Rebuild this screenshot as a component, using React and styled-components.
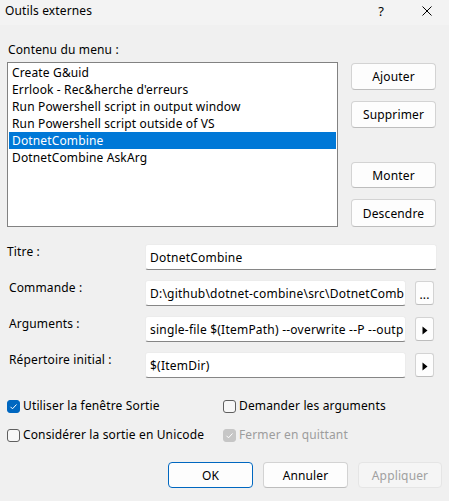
import React from "react";
import styled, { createGlobalStyle } from "styled-components";

const GlobalStyle = createGlobalStyle`
  html, body {
    margin: 0;
    padding: 0;
    background: #f0f0f0;
  }
  body {
    font-family: "Noto Sans", "Open Sans", sans-serif;
    font-size: 12px;
    letter-spacing: 0.14px;
    color: #000;
  }
  * { box-sizing: border-box; }
`;

const Dialog = styled.div`
  width: 449px;
  height: 501px;
  background: #f0f0f0;
  display: flex;
  flex-direction: column;
  overflow: hidden;
`;

const TitleBar = styled.div`
  height: 25px;
  flex: none;
  background: #f3f3f3;
  display: flex;
  align-items: center;
  padding-left: 5px;
`;

const Title = styled.div`
  flex: 1;
  line-height: 16px;
  margin-top: -3px;
`;

const HelpMark = styled.div`
  margin-top: -3px;
  margin-right: 38px;
  line-height: 16px;
  font-size: 13px;
`;

const CloseMark = styled.svg`
  margin-top: -3px;
  margin-right: 17px;
  width: 10px;
  height: 10px;
`;

const Content = styled.div`
  padding: 0 7px;
  display: flex;
  flex-direction: column;
`;

const SectionLabel = styled.div`
  margin-top: 17px;
  padding-left: 1px;
  line-height: 16px;
`;

const TopSection = styled.div`
  margin-top: 4px;
  display: flex;
  gap: 13px;
`;

const ListBox = styled.div`
  width: 331px;
  height: 165px;
  background: #fff;
  border: 1px solid #828282;
  padding: 1px 1px;
`;

const ListItem = styled.div`
  height: 17px;
  line-height: 17px;
  padding-left: 3px;
  white-space: nowrap;
  background: ${p => (p.$selected ? "#0078d7" : "transparent")};
  color: ${p => (p.$selected ? "#fff" : "#000")};
`;

const SideButtons = styled.div`
  width: 85px;
  padding-top: 1px;
  display: flex;
  flex-direction: column;
  gap: 11px;
`;

const Button = styled.div`
  width: ${p => p.$width || 85}px;
  height: ${p => p.$height || 27}px;
  margin-top: ${p => p.$offset || 0}px;
  display: flex;
  align-items: center;
  justify-content: center;
  background: ${p => (p.$disabled ? "#f5f5f5" : "#fdfdfd")};
  color: ${p => (p.$disabled ? "#a0a0a0" : "#000")};
  border: 1px solid ${p => (p.$primary ? "#0067c0" : p.$disabled ? "#e5e5e5" : "#d3d3d3")};
  border-bottom-color: ${p => (p.$primary ? "#0067c0" : p.$disabled ? "#e5e5e5" : "#bdbdbd")};
  border-radius: 4px;
  flex: none;
`;

const Form = styled.div`
  margin-top: 17px;
  display: flex;
  flex-direction: column;
  gap: 10px;
`;

const FormRow = styled.div`
  display: flex;
  align-items: flex-start;
`;

const FieldLabel = styled.div`
  width: 138px;
  flex: none;
  padding-left: ${p => p.$indent || 0}px;
  line-height: 16px;
`;

const Field = styled.input`
  width: ${p => p.$width}px;
  height: 26px;
  background: #fff;
  border: 1px solid #ececec;
  border-bottom: 1px solid #868686;
  border-radius: 3px;
  padding: 0 1px 0 4px;
  margin: 0;
  font: inherit;
  letter-spacing: 0.22px;
  color: #000;
  outline: none;
  flex: none;
`;

const SmallButton = styled(Button)`
  margin-left: 9px;
  margin-top: 1px;
  border-radius: 3px;
  align-items: ${p => (p.$dots ? "flex-end" : "center")};
  padding-bottom: ${p => (p.$dots ? 3 : 0)}px;
  line-height: 12px;
`;

const Options = styled.div`
  margin-top: 20px;
  display: grid;
  grid-template-columns: 216px 1fr;
  row-gap: 13px;
`;

const Option = styled.div`
  display: flex;
  align-items: center;
  height: 16px;
  line-height: 16px;
  gap: 3px;
  white-space: nowrap;
  color: ${p => (p.$disabled ? "#9d9d9d" : "#000")};
`;

const Box = styled.span`
  width: 13px;
  height: 13px;
  flex: none;
  border-radius: 3px;
  display: flex;
  align-items: center;
  justify-content: center;
  background: ${p => (p.$disabled ? "#c6c6c6" : p.$checked ? "#0067c0" : "#f7f7f7")};
  border: 1px solid ${p => (p.$disabled ? "#c6c6c6" : p.$checked ? "#0067c0" : "#5f5f5f")};
`;

const Footer = styled.div`
  margin-top: 19px;
  display: flex;
  justify-content: flex-end;
  gap: 10px;
`;

function Arrow() {
  return (
    <svg width="6" height="9" viewBox="0 0 6 9" style={{ marginTop: 2 }}>
      <path d="M0.5 0.5 L5.5 4.5 L0.5 8.5 Z" fill="#000" />
    </svg>
  );
}

function Checkbox({ checked, disabled, children }) {
  return (
    <Option $disabled={disabled}>
      <Box $checked={checked} $disabled={disabled}>
        {checked && (
          <svg width="9" height="9" viewBox="0 0 9 9">
            <path d="M1.5 4.8 L3.5 6.8 L7.5 2.5" fill="none" stroke="#fff" strokeWidth="1" />
          </svg>
        )}
      </Box>
      {children}
    </Option>
  );
}

const items = [
  "Create G&uid",
  "Errlook - Rec&herche d'erreurs",
  "Run Powershell script in output window",
  "Run Powershell script outside of VS",
  "DotnetCombine",
  "DotnetCombine AskArg",
];

export default function App() {
  return (
    <Dialog>
      <GlobalStyle />
      <TitleBar>
        <Title>Outils externes</Title>
        <HelpMark>?</HelpMark>
        <CloseMark viewBox="0 0 10 10">
          <path d="M0.5 0.5 L9.5 9.5 M9.5 0.5 L0.5 9.5" stroke="#000" strokeWidth="1" />
        </CloseMark>
      </TitleBar>
      <Content>
        <SectionLabel>Contenu du menu :</SectionLabel>
        <TopSection>
          <ListBox>
            {items.map((item, i) => (
              <ListItem key={item} $selected={i === 4}>
                {item}
              </ListItem>
            ))}
          </ListBox>
          <SideButtons>
            <Button>Ajouter</Button>
            <Button>Supprimer</Button>
            <Button $offset={23} $height={26}>Monter</Button>
            <Button $height={28}>Descendre</Button>
          </SideButtons>
        </TopSection>

        <Form>
          <FormRow>
            <FieldLabel $indent={0}>Titre :</FieldLabel>
            <Field $width={292} readOnly value="DotnetCombine" />
          </FormRow>
          <FormRow>
            <FieldLabel $indent={2}>Commande :</FieldLabel>
            <Field
              $width={261}
              readOnly
              value="D:\github\dotnet-combine\src\DotnetCombine\bin\Release\dotnet-combine.exe"
            />
            <SmallButton $width={19} $height={24} $dots>...</SmallButton>
          </FormRow>
          <FormRow>
            <FieldLabel $indent={2}>Arguments :</FieldLabel>
            <Field
              $width={261}
              readOnly
              value="single-file $(ItemPath) --overwrite --P --output $(ItemDir)"
            />
            <SmallButton $width={19} $height={24}><Arrow /></SmallButton>
          </FormRow>
          <FormRow>
            <FieldLabel $indent={2}>Répertoire initial :</FieldLabel>
            <Field $width={261} readOnly value="$(ItemDir)" />
            <SmallButton $width={19} $height={24}><Arrow /></SmallButton>
          </FormRow>
        </Form>

        <Options>
          <Checkbox checked>Utiliser la fenêtre Sortie</Checkbox>
          <Checkbox>Demander les arguments</Checkbox>
          <Checkbox>Considérer la sortie en Unicode</Checkbox>
          <Checkbox checked disabled>Fermer en quittant</Checkbox>
        </Options>

        <Footer>
          <Button $primary $height={26}>OK</Button>
          <Button $height={26}>Annuler</Button>
          <Button $disabled $width={84} $height={26}>Appliquer</Button>
        </Footer>
      </Content>
    </Dialog>
  );
}
